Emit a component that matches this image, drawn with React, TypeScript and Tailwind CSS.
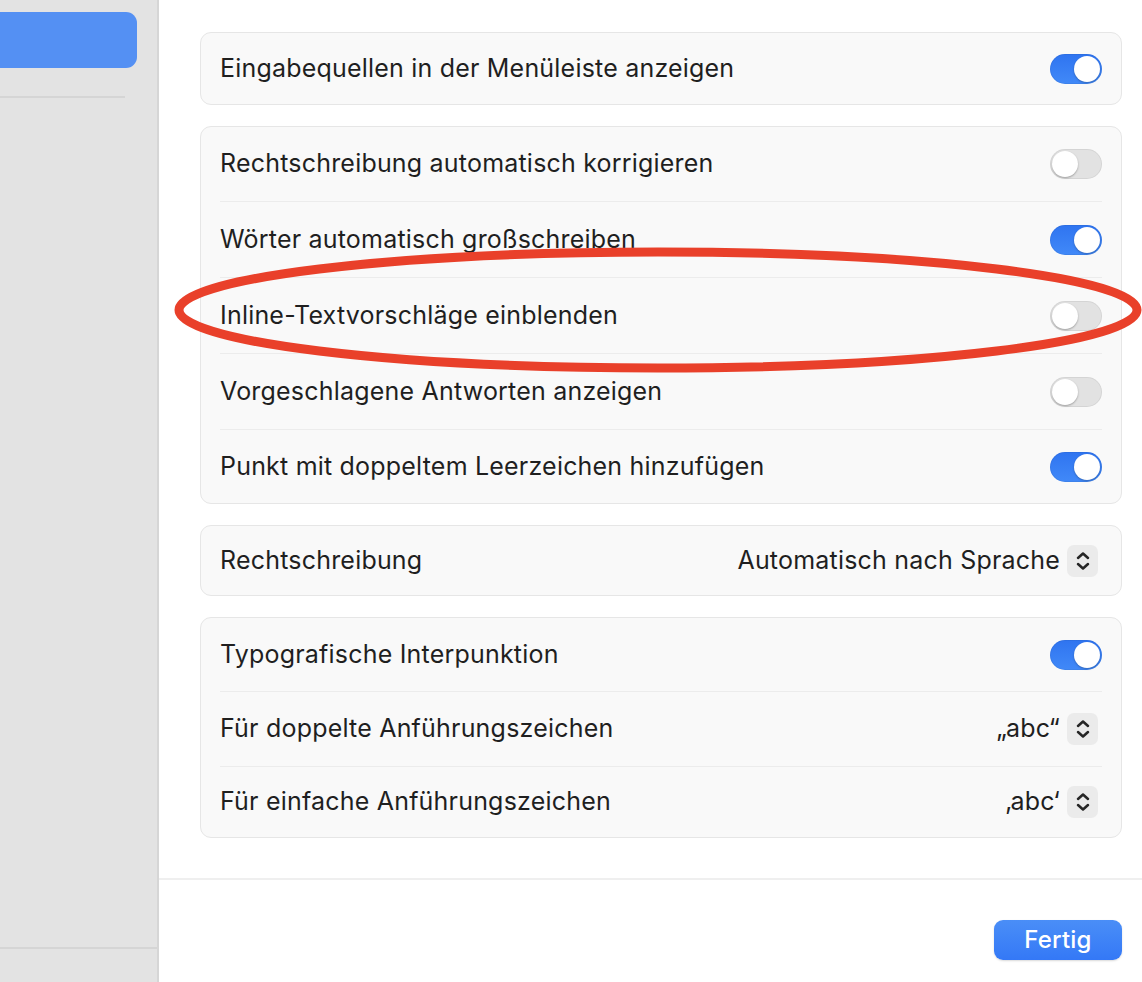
import React from "react";

const Toggle = ({ on }: { on: boolean }) =>
  on ? (
    <div className="w-[52px] h-[30px] rounded-full bg-gradient-to-b from-[#2f74f0] to-[#4189f8] flex items-center justify-end pr-[2px] shadow-[inset_0_0_0_1px_rgba(0,0,0,0.05)]">
      <div className="w-[26px] h-[26px] rounded-full bg-white shadow-[0_1px_2px_rgba(0,0,0,0.25)]" />
    </div>
  ) : (
    <div className="w-[52px] h-[30px] rounded-full bg-[#e2e2e2] flex items-center justify-start pl-[2px] shadow-[inset_0_0_0_1px_rgba(0,0,0,0.06)]">
      <div className="w-[26px] h-[26px] rounded-full bg-white shadow-[0_1px_2px_rgba(0,0,0,0.3)]" />
    </div>
  );

const Stepper = () => (
  <div className="w-[31px] h-[32px] rounded-[7px] bg-[#ebebeb] flex items-center justify-center">
    <svg width="16" height="22" viewBox="0 0 16 22" fill="none" stroke="#262626" strokeWidth="2.5" strokeLinecap="round" strokeLinejoin="round">
      <path d="M3 8 L8 3.5 L13 8" />
      <path d="M3 14 L8 18.5 L13 14" />
    </svg>
  </div>
);

const Row = ({
  label,
  right,
  last,
  h = "h-[76px]",
}: {
  label: string;
  right: React.ReactNode;
  last?: boolean;
  h?: string;
}) => (
  <div className={`${h} flex items-center justify-between ${last ? "" : "border-b border-[#ececec]"}`}>
    <span>{label}</span>
    {right}
  </div>
);

const Card = ({ children }: { children: React.ReactNode }) => (
  <div className="rounded-[11px] bg-[#f9f9f9] border border-[#e6e6e6] px-[19px]">{children}</div>
);

const Select = ({ value }: { value: string }) => (
  <div className="flex items-center gap-[7px] mr-[4px]">
    <span>{value}</span>
    <Stepper />
  </div>
);

export default function App() {
  return (
    <div
      className="relative w-[1142px] h-[982px] flex overflow-hidden text-[#1f1f1f] text-[25px] tracking-[0.2px]"
      style={{ fontFamily: "Inter, 'Noto Sans', sans-serif" }}
    >
      <aside className="w-[159px] h-full bg-[#e3e3e3] border-r-2 border-[#d6d6d6] flex flex-col">
        <div className="pt-[12px] pr-[20px]">
          <div className="h-[56px] rounded-r-[11px] bg-[#5490f3]" />
        </div>
        <div className="mt-[28px] mr-[32px] h-[2px] bg-[#d5d5d5]" />
        <div className="flex-1" />
        <div className="h-[2px] bg-[#d5d5d5] mb-[33px]" />
      </aside>
      <main className="flex-1 bg-white flex flex-col">
        <div className="pl-[41px] pr-[20px] pt-[32px] flex flex-col gap-[21px]">
          <Card>
            <Row label="Eingabequellen in der Menüleiste anzeigen" right={<Toggle on />} last h="h-[71px]" />
          </Card>
          <Card>
            <Row label="Rechtschreibung automatisch korrigieren" right={<Toggle on={false} />} h="h-[75px]" />
            <Row label="Wörter automatisch großschreiben" right={<Toggle on />} />
            <Row label="Inline-Textvorschläge einblenden" right={<Toggle on={false} />} />
            <Row label="Vorgeschlagene Antworten anzeigen" right={<Toggle on={false} />} />
            <Row label="Punkt mit doppeltem Leerzeichen hinzufügen" right={<Toggle on />} last h="h-[73px]" />
          </Card>
          <Card>
            <Row label="Rechtschreibung" right={<Select value="Automatisch nach Sprache" />} last h="h-[69px]" />
          </Card>
          <Card>
            <Row label="Typografische Interpunktion" right={<Toggle on />} h="h-[74px]" />
            <Row label="Für doppelte Anführungszeichen" right={<Select value="„abc“" />} h="h-[75px]" />
            <Row label="Für einfache Anführungszeichen" right={<Select value="‚abc‘" />} last h="h-[70px]" />
          </Card>
        </div>
        <div className="mt-[40px] h-[2px] bg-[#efefef]" />
        <div className="flex justify-end pr-[20px] pt-[40px]">
          <button className="w-[128px] h-[40px] rounded-[9px] bg-gradient-to-b from-[#4a8ef7] to-[#3478f6] text-white text-[24px] font-medium shadow-[0_1px_2px_rgba(0,0,0,0.15)]">
            Fertig
          </button>
        </div>
      </main>
      <svg className="absolute left-0 top-0 pointer-events-none" width="1142" height="982">
        <ellipse cx="658" cy="310" rx="479" ry="58" fill="none" stroke="#e9402a" strokeWidth="9" />
      </svg>
    </div>
  );
}
